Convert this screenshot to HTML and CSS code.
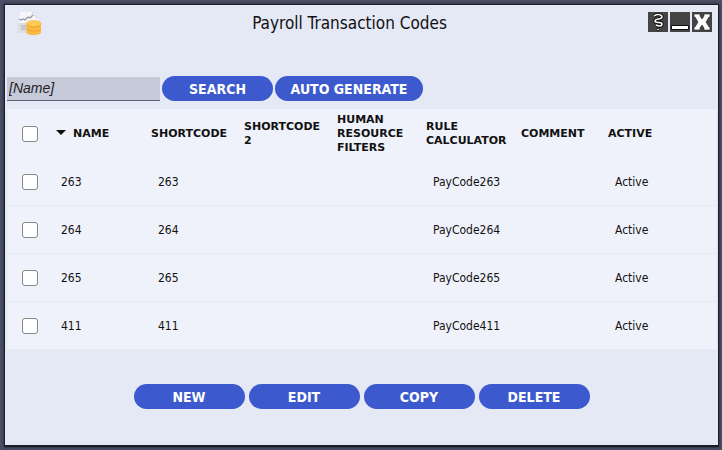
FILE: index.html
```html
<!DOCTYPE html>
<html lang="en">
<head>
  <meta charset="UTF-8">
  <meta name="viewport" content="width=device-width, initial-scale=1.0">
  <title>Payroll Transaction Codes</title>
  <link rel="stylesheet" href="styles.css">
</head>
<body>
  <div class="window">
    <header class="title-bar">
      <svg class="app-icon" width="26" height="26" viewBox="0 0 26 26">
        <path d="M3 1h13l5 7v14H1z" fill="#f6f6f8"/>
        <path d="M1 12h10v10H1z" fill="#dddee3"/>
        <path d="M4 14h5v5H4z" fill="#c6c8ce"/>
        <path d="M2 8l2 1 2-1 2 1 3-3 2 1 3-3" fill="none" stroke="#9296a3" stroke-width="1.2"/>
        <path d="M15 1l5 6" stroke="#c9cad1"/>
        <path d="M9.500 12.500v8.500c0 2 3 3 7 3s7.500-1 7.500-3v-8.500z" fill="#f8ae33"/>
        <path d="M10 16c2 3 12 3 14 0M10 20c2 3 12 3 14 0" fill="none" stroke="#ffcb55"/>
        <ellipse cx="16.800" cy="12.500" rx="7.300" ry="3" fill="#ffca55" stroke="#f3a62d" stroke-width=".5"/>
      </svg>
      <h1>Payroll Transaction Codes</h1>
      <div class="window-buttons">
        <button type="button" aria-label="Help">
          <svg width="20" height="20" viewBox="0 0 20 20">
            <path d="M6 4c2-2 8-2 8 1s-7 1-7 4 7 0 7 3-4 2-6 1" fill="none" stroke="#111" stroke-width="3.500"/>
            <path d="M6 4c2-2 8-2 8 1s-7 1-7 4 7 0 7 3-4 2-6 1" fill="none" stroke="#fff" stroke-width="1.500"/>
            <circle cx="10" cy="17.500" r="1.300" fill="#fff" stroke="#111"/>
          </svg>
        </button>
        <button type="button" aria-label="Minimize">
          <svg width="20" height="20" viewBox="0 0 20 20">
            <path d="M1.500 13.500h17v4h-17z" fill="#fff" stroke="#111"/>
          </svg>
        </button>
        <button type="button" aria-label="Close">
          <svg width="20" height="20" viewBox="0 0 20 20">
            <path d="M2 2h6v2l2 3 2-3V2h6v3h-1l-3 5 3 5h1v3h-6v-2l-2-3-2 3v2H2v-3h1l3-5-3-5H2z" fill="#fff" stroke="#222" stroke-width=".6"/>
          </svg>
        </button>
      </div>
    </header>

    <div class="search-bar">
      <input type="text" class="search-input" placeholder="[Name]" aria-label="Name">
      <button type="button" class="btn">SEARCH</button>
      <button type="button" class="btn btn-wide">AUTO GENERATE</button>
    </div>

    <table class="codes">
      <colgroup>
        <col class="col-check">
        <col class="col-name">
        <col class="col-short">
        <col class="col-short">
        <col class="col-filters">
        <col class="col-rule">
        <col class="col-comment">
        <col>
      </colgroup>
      <thead>
        <tr>
          <th class="check"><input type="checkbox" aria-label="Select all"></th>
          <th class="sorted">NAME</th>
          <th>SHORTCODE</th>
          <th>SHORTCODE 2</th>
          <th>HUMAN RESOURCE FILTERS</th>
          <th>RULE CALCULATOR</th>
          <th>COMMENT</th>
          <th>ACTIVE</th>
        </tr>
      </thead>
      <tbody>
        <tr>
          <td class="check"><input type="checkbox" aria-label="Select 263"></td>
          <td>263</td>
          <td>263</td>
          <td></td>
          <td></td>
          <td>PayCode263</td>
          <td></td>
          <td>Active</td>
        </tr>
        <tr>
          <td class="check"><input type="checkbox" aria-label="Select 264"></td>
          <td>264</td>
          <td>264</td>
          <td></td>
          <td></td>
          <td>PayCode264</td>
          <td></td>
          <td>Active</td>
        </tr>
        <tr>
          <td class="check"><input type="checkbox" aria-label="Select 265"></td>
          <td>265</td>
          <td>265</td>
          <td></td>
          <td></td>
          <td>PayCode265</td>
          <td></td>
          <td>Active</td>
        </tr>
        <tr>
          <td class="check"><input type="checkbox" aria-label="Select 411"></td>
          <td>411</td>
          <td>411</td>
          <td></td>
          <td></td>
          <td>PayCode411</td>
          <td></td>
          <td>Active</td>
        </tr>
      </tbody>
    </table>

    <div class="actions">
      <button type="button" class="btn">NEW</button>
      <button type="button" class="btn">EDIT</button>
      <button type="button" class="btn">COPY</button>
      <button type="button" class="btn">DELETE</button>
    </div>
  </div>
</body>
</html>
```

FILE: styles.css
```css
* {
  box-sizing: border-box;
}

body {
  font-family: Tahoma, "DejaVu Sans Condensed", "DejaVu Sans", sans-serif;
  background: #4a5067;
  color: #111;
  margin: 0;
  padding: 4px 3px 3px 4px;
}

.window {
  background: #e5e8f5;
  border: 1px solid #1c1f2b;
  border-bottom-width: 2px;
  padding: 0 2px 36px;
  box-shadow: 0 0 3px #1c1f2b;
}

/* Title bar */
.title-bar {
  display: flex;
  justify-content: space-between;
  align-items: flex-start;
  padding: 6px 4px 0 10px;
  height: 71px;
}

.title-bar h1 {
  font-size: 17px;
  font-weight: normal;
  line-height: 24px;
  margin: 0;
  flex: 1;
  text-align: center;
  padding-left: 8px;
}

.window-buttons {
  display: flex;
  gap: 2px;
  padding-top: 1px;
}

.window-buttons button {
  background: #444;
  border: none;
  width: 20px;
  height: 20px;
  padding: 0;
  cursor: pointer;
}

.window-buttons svg {
  display: block;
}

/* Search */
.search-bar {
  display: flex;
  align-items: center;
  gap: 2px;
  padding-bottom: 8px;
}

.search-input {
  font: italic 14px "Liberation Sans", Arial, sans-serif;
  background: #c6c9d8;
  border: none;
  border-bottom: 1px solid #5b6079;
  width: 153px;
  height: 24px;
  padding: 0 2px;
}

.search-input::placeholder {
  color: #222;
}

.btn {
  font-family: inherit;
  font-size: 14px;
  font-weight: bold;
  color: white;
  background: #3c5acd;
  border: none;
  border-radius: 13px;
  width: 111px;
  height: 25px;
  padding: 1px 0 0;
  cursor: pointer;
}

.btn-wide {
  width: 148px;
}

/* Codes table */
.codes {
  background: #eff2fa;
  width: 100%;
  table-layout: fixed;
  border-collapse: collapse;
  font-size: 12px;
  text-align: left;
}

.col-check {
  width: 47px;
}

.col-name {
  width: 97px;
}

.col-short {
  width: 93px;
}

.col-filters {
  width: 89px;
}

.col-rule {
  width: 95px;
}

.col-comment {
  width: 87px;
}

.codes th,
.codes td {
  height: 48px;
  padding: 2px 0 0 7px;
}

.codes th {
  font-family: Verdana, "DejaVu Sans", sans-serif;
  font-size: 11px;
  line-height: 14px;
  padding-left: 0;
  padding-right: 7px;
}

.codes tr + tr {
  border-top: 1px solid #e5e8f5;
}

.codes .check {
  padding-left: 15px;
}

.codes .check input {
  appearance: none;
  display: block;
  background: white;
  border: 1px solid #858585;
  border-radius: 3px;
  width: 16px;
  height: 16px;
  margin: 0;
}

.codes .check input:checked {
  background: #3c5acd;
}

.sorted::before {
  content: "";
  display: inline-block;
  border: 5px solid transparent;
  border-top-color: #111;
  border-bottom: none;
  margin: 0 7px 2px 2px;
}

/* Bottom buttons */
.actions {
  display: flex;
  justify-content: center;
  gap: 4px;
  padding-top: 35px;
}
```
